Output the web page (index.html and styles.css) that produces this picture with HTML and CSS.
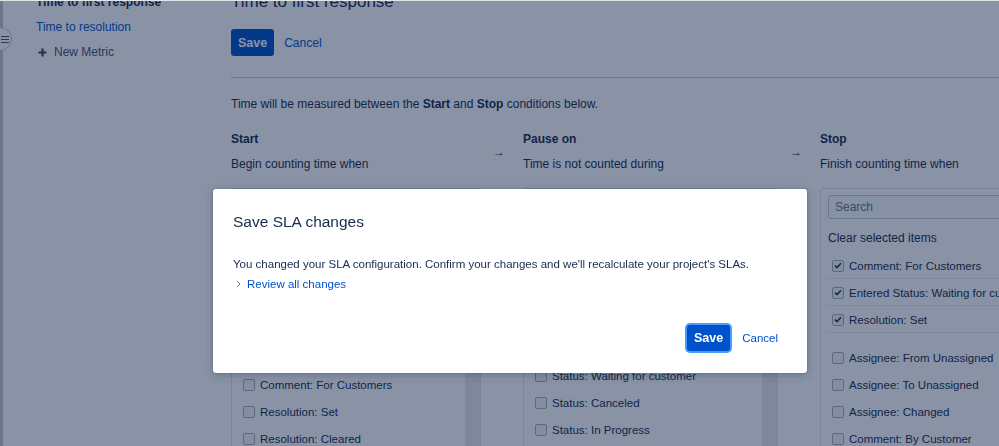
FILE: index.html
```html
<!DOCTYPE html>
<html lang="en">
<head>
<meta charset="utf-8">
<title>SLA – Time to first response</title>
<link rel="stylesheet" href="styles.css">
</head>
<body>
<div class="app">
  <div class="nav-edge"></div>
  <button class="collapse" aria-label="Collapse sidebar">
    <svg width="8" height="7" viewBox="0 0 8 7"><path d="M0 0.5H8M0 3.5H8M0 6.5H8" stroke="#42526e" stroke-width="1.2"/></svg>
  </button>
  <nav class="sidebar">
    <ul class="nav-list">
      <li class="nav-item is-active">Time to first response</li>
      <li class="nav-item"><a class="nav-link">Time to resolution</a></li>
      <li class="nav-item nav-new">
        <svg class="plus" width="9" height="9" viewBox="0 0 9 9"><path d="M4.5 0.5V8.5M0.5 4.5H8.5" stroke="#344563" stroke-width="2.2"/></svg>
        <span>New Metric</span>
      </li>
    </ul>
  </nav>
  <main class="main">
    <h1 class="page-title">Time to first response</h1>
    <div class="actions">
      <button class="btn-primary">Save</button>
      <a class="link">Cancel</a>
    </div>
    <hr class="divider">
    <p class="intro">Time will be measured between the <b>Start</b> and <b>Stop</b> conditions below.</p>

    <section class="conditions">
      <div class="cond-head">
        <div class="cond-title">Start</div>
        <div class="cond-sub">Begin counting time when</div>
      </div>
      <div class="cond-arrow">→</div>
      <div class="cond-head">
        <div class="cond-title">Pause on</div>
        <div class="cond-sub">Time is not counted during</div>
      </div>
      <div class="cond-arrow">→</div>
      <div class="cond-head">
        <div class="cond-title">Stop</div>
        <div class="cond-sub">Finish counting time when</div>
      </div>

      <div class="panel">
        <div class="panel-body">
          <input class="search" placeholder="Search">
          <div class="clear">Clear selected items</div>
          <ul class="options">
            <li class="option is-selected"><span class="cb is-checked"><svg width="8" height="7" viewBox="0 0 8 7"><path d="M1 3.6L3 5.6L7 1.2" fill="none" stroke="#253858" stroke-width="1.6"/></svg></span><span class="opt-label">Issue Created</span></li>
            <li class="options-sep"></li>
            <li class="option"><span class="cb"></span><span class="opt-label">Assignee: From Unassigned</span></li>
            <li class="option"><span class="cb"></span><span class="opt-label">Assignee: To Unassigned</span></li>
            <li class="option"><span class="cb"></span><span class="opt-label">Assignee: Changed</span></li>
            <li class="option"><span class="cb"></span><span class="opt-label">Comment: For Customers</span></li>
            <li class="option"><span class="cb"></span><span class="opt-label">Resolution: Set</span></li>
            <li class="option"><span class="cb"></span><span class="opt-label">Resolution: Cleared</span></li>
          </ul>
        </div>
        <div class="panel-track"></div>
      </div>
      <div></div>
      <div class="panel">
        <div class="panel-body">
          <input class="search" placeholder="Search">
          <ul class="options options-plain">
            <li class="option"><span class="cb"></span><span class="opt-label">Status: Pending</span></li>
            <li class="option"><span class="cb"></span><span class="opt-label">Status: Waiting for approval</span></li>
            <li class="option"><span class="cb"></span><span class="opt-label">Status: Escalated</span></li>
            <li class="option"><span class="cb"></span><span class="opt-label">Status: Resolved</span></li>
            <li class="option"><span class="cb"></span><span class="opt-label">Status: Waiting for support</span></li>
            <li class="option"><span class="cb"></span><span class="opt-label">Status: Waiting for customer</span></li>
            <li class="option"><span class="cb"></span><span class="opt-label">Status: Canceled</span></li>
            <li class="option"><span class="cb"></span><span class="opt-label">Status: In Progress</span></li>
          </ul>
        </div>
        <div class="panel-track"></div>
      </div>
      <div></div>
      <div class="panel">
        <div class="panel-body">
          <input class="search" placeholder="Search">
          <div class="clear">Clear selected items</div>
          <ul class="options">
            <li class="option is-selected"><span class="cb is-checked"><svg width="8" height="7" viewBox="0 0 8 7"><path d="M1 3.6L3 5.6L7 1.2" fill="none" stroke="#253858" stroke-width="1.6"/></svg></span><span class="opt-label">Comment: For Customers</span></li>
            <li class="option is-selected"><span class="cb is-checked"><svg width="8" height="7" viewBox="0 0 8 7"><path d="M1 3.6L3 5.6L7 1.2" fill="none" stroke="#253858" stroke-width="1.6"/></svg></span><span class="opt-label">Entered Status: Waiting for customer</span></li>
            <li class="option is-selected"><span class="cb is-checked"><svg width="8" height="7" viewBox="0 0 8 7"><path d="M1 3.6L3 5.6L7 1.2" fill="none" stroke="#253858" stroke-width="1.6"/></svg></span><span class="opt-label">Resolution: Set</span></li>
            <li class="options-sep"></li>
            <li class="option"><span class="cb"></span><span class="opt-label">Assignee: From Unassigned</span></li>
            <li class="option"><span class="cb"></span><span class="opt-label">Assignee: To Unassigned</span></li>
            <li class="option"><span class="cb"></span><span class="opt-label">Assignee: Changed</span></li>
            <li class="option"><span class="cb"></span><span class="opt-label">Comment: By Customer</span></li>
          </ul>
        </div>
        <div class="panel-track"></div>
      </div>
    </section>
  </main>
</div>

<div class="blanket"></div>
<div class="topline"></div>

<div class="modal" role="dialog" aria-labelledby="modal-title">
  <h2 class="modal-title" id="modal-title">Save SLA changes</h2>
  <p class="modal-text">You changed your SLA configuration. Confirm your changes and we'll recalculate your project's SLAs.</p>
  <div class="review">
    <svg width="5" height="8" viewBox="0 0 5 8"><path d="M1 1L4 4L1 7" fill="none" stroke="#6b778c" stroke-width="1"/></svg>
    <a class="link">Review all changes</a>
  </div>
  <div class="modal-footer">
    <button class="btn-primary is-focused">Save</button>
    <button class="btn-link">Cancel</button>
  </div>
</div>
</body>
</html>
```

FILE: styles.css
```css
* { box-sizing: border-box; }

html, body {
  margin: 0;
  height: 100%;
  overflow: hidden;
}

body {
  font-family: "Liberation Sans", Arial, sans-serif;
  font-size: 12px;
  color: #172b4d;
  background: #fff;
}

button, input { font-family: inherit; }

.link { color: #0052cc; cursor: pointer; }

.app {
  display: flex;
  height: 446px;
  overflow: hidden;
  position: relative;
}

.nav-edge {
  flex: none;
  width: 3px;
  background: #c1c7d0;
}

.collapse {
  position: absolute;
  left: -12px;
  top: 27px;
  width: 24px;
  height: 24px;
  border-radius: 50%;
  border: 1px solid #c1c7d0;
  background: #fff;
  padding: 0 0 0 12px;
  display: flex;
  align-items: center;
}

.sidebar {
  flex: none;
  width: 228px;
  padding-left: 33px;
}

.nav-list {
  list-style: none;
  margin: -10px 0 0;
  padding: 0;
}

.nav-item { line-height: 25px; white-space: nowrap; }
.nav-item.is-active { font-weight: bold; }
.nav-link { color: #0052cc; }

.nav-new {
  display: flex;
  align-items: center;
  gap: 7px;
  padding-left: 2px;
  color: #42526e;
}

.main {
  flex: 1;
  min-width: 0;
  overflow: hidden;
}

.page-title {
  margin: -8px 0 0;
  font-size: 17px;
  line-height: 20px;
  font-weight: normal;
  white-space: nowrap;
}

.actions {
  display: flex;
  align-items: center;
  gap: 10px;
  margin-top: 17px;
}

.btn-primary {
  height: 27px;
  padding: 0 7px;
  border: none;
  border-radius: 3px;
  background: #0052cc;
  color: #fff;
  font-weight: bold;
  font-size: 12.5px;
}

.divider {
  margin: 21px 0 0;
  border: none;
  border-top: 1px solid #c1c7d0;
}

.intro {
  margin: 18px 0 0;
  line-height: 16px;
}

.conditions {
  display: grid;
  grid-template-columns: 250px 42px 255px 42px 255px;
  row-gap: 16px;
  margin-top: 19px;
}

.cond-title { font-weight: bold; line-height: 16px; }
.cond-sub { margin-top: 9px; line-height: 16px; white-space: nowrap; }

.cond-arrow {
  align-self: center;
  text-align: center;
  padding-right: 6px;
  line-height: 16px;
}

.panel {
  height: 400px;
  display: flex;
  border: 1px solid #dfe1e6;
  border-radius: 3px;
}

.panel-body {
  flex: 1;
  min-width: 0;
  padding: 6px 7px;
}

.panel-track {
  flex: none;
  width: 15px;
  background: #e8eaee;
}

.search {
  display: block;
  width: 100%;
  height: 24px;
  border: 1px solid #c8ccd4;
  border-radius: 3px;
  background: #fafbfc;
  padding: 0 6px;
  font-size: 12px;
  color: #172b4d;
}
.search::placeholder { color: #6b778c; }

.clear {
  margin-top: 11px;
  line-height: 16px;
}

.options {
  list-style: none;
  margin: 6px 0 0;
  padding: 0;
}
.options-plain { margin-top: 8px; }

.option {
  height: 27px;
  display: flex;
  align-items: center;
  gap: 5px;
  padding-left: 4px;
  white-space: nowrap;
}

.option.is-selected {
  box-shadow: inset 0 -1px 0 #ebecf0;
  background: #fff;
}

.options-sep { height: 11px; }

.cb {
  flex: none;
  width: 12px;
  height: 12px;
  border: 1px solid #a5adba;
  border-radius: 2px;
  background: #f4f5f7;
  display: flex;
  align-items: center;
  justify-content: center;
}

.opt-label { color: #172b4d; font-size: 11.5px; }

.blanket {
  position: fixed;
  inset: 0;
  background: rgba(9, 30, 66, 0.48);
}

.topline {
  position: fixed;
  top: 0;
  left: 0;
  right: 0;
  height: 1px;
  background: #e2e4e8;
}

.modal {
  position: fixed;
  left: 213px;
  top: 189px;
  width: 594px;
  background: #fff;
  border-radius: 3px;
  padding: 23px 21px 22px 20px;
  box-shadow: 0 0 0 1px rgba(9, 30, 66, 0.08), 0 2px 8px rgba(9, 30, 66, 0.25);
}

.modal-title {
  margin: 0;
  font-size: 15.5px;
  line-height: 20px;
  font-weight: normal;
  color: #172b4d;
}

.modal-text {
  margin: 24px 0 0;
  font-size: 11.5px;
  line-height: 16px;
}

.review {
  display: flex;
  align-items: center;
  gap: 6px;
  margin-top: 4px;
  padding-left: 3px;
  font-size: 11.5px;
  line-height: 16px;
}

.modal-footer {
  display: flex;
  justify-content: flex-end;
  align-items: center;
  gap: 4px;
  margin-top: 33px;
}

.modal-footer .btn-primary { height: 26px; }

.btn-primary.is-focused {
  box-shadow: 0 0 0 2px #4c9aff;
}

.btn-link {
  height: 26px;
  padding: 0 8px;
  border: none;
  background: none;
  color: #0052cc;
  font-size: 11.5px;
}
```
